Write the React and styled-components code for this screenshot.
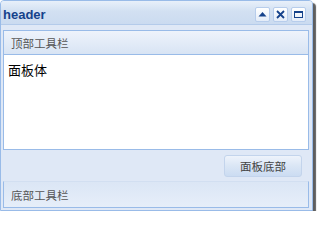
import styled, { createGlobalStyle } from "styled-components";

const GlobalStyle = createGlobalStyle`
    body {
        margin: 0;
        background: #ffffff;
        font-family: "Liberation Sans", "Noto Sans CJK SC", sans-serif;
    }
`

const Panel = styled.div`
    width: 313px;
    height: 211px;
    box-sizing: border-box;
    display: flex;
    flex-direction: column;
    border: 1px solid #99bbe8;
    border-radius: 4px 4px 0 0;
    background: #dfe8f6;
    box-shadow: 3px 3px 1px rgba(40, 40, 40, 0.75);
`

const Header = styled.div`
    height: 25px;
    box-sizing: border-box;
    padding: 3px 6px 0 2px;
    display: flex;
    align-items: center;
    justify-content: space-between;
    border-bottom: 1px solid #b4cbea;
    border-radius: 3px 3px 0 0;
    background: linear-gradient(#e8f0fa, #d2e0f2 45%, #cbdbf0);
`

const Title = styled.span`
    font-size: 13px;
    font-weight: bold;
    color: #15428b;
`

const Tools = styled.div`
    display: flex;
    gap: 3px;
`

const ToolButton = styled.div`
    width: 15px;
    height: 15px;
    box-sizing: border-box;
    display: flex;
    align-items: center;
    justify-content: center;
    border: 1px solid #b7cdec;
    border-radius: 2px;
    background: linear-gradient(#ffffff, #e3ecf8);
`

const Content = styled.div`
    flex: 1;
    display: flex;
    flex-direction: column;
    padding: 5px 3px 2px 2px;
`

const Toolbar = styled.div`
    height: ${(p) => p.$height}px;
    box-sizing: border-box;
    display: flex;
    align-items: center;
    padding-left: 7px;
    border: 1px solid #99bbe8;
    border-top-color: ${(p) => (p.$bottom ? "#d2dff1" : "#99bbe8")};
    background: ${(p) =>
        p.$bottom
            ? "linear-gradient(#dbe6f5, #e6eef9)"
            : "linear-gradient(#eef3fb, #d8e4f4)"};
    font-size: 11.5px;
    color: #555;
`

const Body = styled.div`
    height: 95px;
    box-sizing: border-box;
    padding: 5px 4px;
    background: #ffffff;
    border: 1px solid #99bbe8;
    border-top: none;
    font-size: 13px;
    color: #000;
`

const Footer = styled.div`
    height: 31px;
    display: flex;
    align-items: center;
    justify-content: flex-end;
    padding-right: 7px;
`

const Button = styled.div`
    width: 78px;
    height: 22px;
    box-sizing: border-box;
    display: flex;
    align-items: center;
    justify-content: center;
    border: 1px solid #c3d4ec;
    border-radius: 3px;
    background: linear-gradient(#eef3fb, #dae6f5 50%, #cbdcf2);
    font-size: 11.5px;
    color: #444;
`

const icon = { width: 11, height: 11, viewBox: "0 0 11 11" }

const App = () => {
    return (
        <>
            <GlobalStyle />
            <Panel>
                <Header>
                    <Title>header</Title>
                    <Tools>
                        <ToolButton>
                            <svg {...icon}>
                                <path d="M1.5 7.5 L5.5 3 L9.5 7.5 Z" fill="#15428b" />
                            </svg>
                        </ToolButton>
                        <ToolButton>
                            <svg {...icon}>
                                <path d="M2 2 L9 9 M9 2 L2 9" stroke="#15428b" strokeWidth="1.8" />
                            </svg>
                        </ToolButton>
                        <ToolButton>
                            <svg {...icon}>
                                <rect x="1.5" y="2.5" width="8" height="6" fill="none" stroke="#15428b" strokeWidth="1" />
                                <rect x="1.5" y="2" width="8" height="2" fill="#15428b" />
                            </svg>
                        </ToolButton>
                    </Tools>
                </Header>
                <Content>
                    <Toolbar $height={25}>顶部工具栏</Toolbar>
                    <Body>面板体</Body>
                    <Footer>
                        <Button>面板底部</Button>
                    </Footer>
                    <Toolbar $height={27} $bottom>底部工具栏</Toolbar>
                </Content>
            </Panel>
        </>
    )
}

export default App
